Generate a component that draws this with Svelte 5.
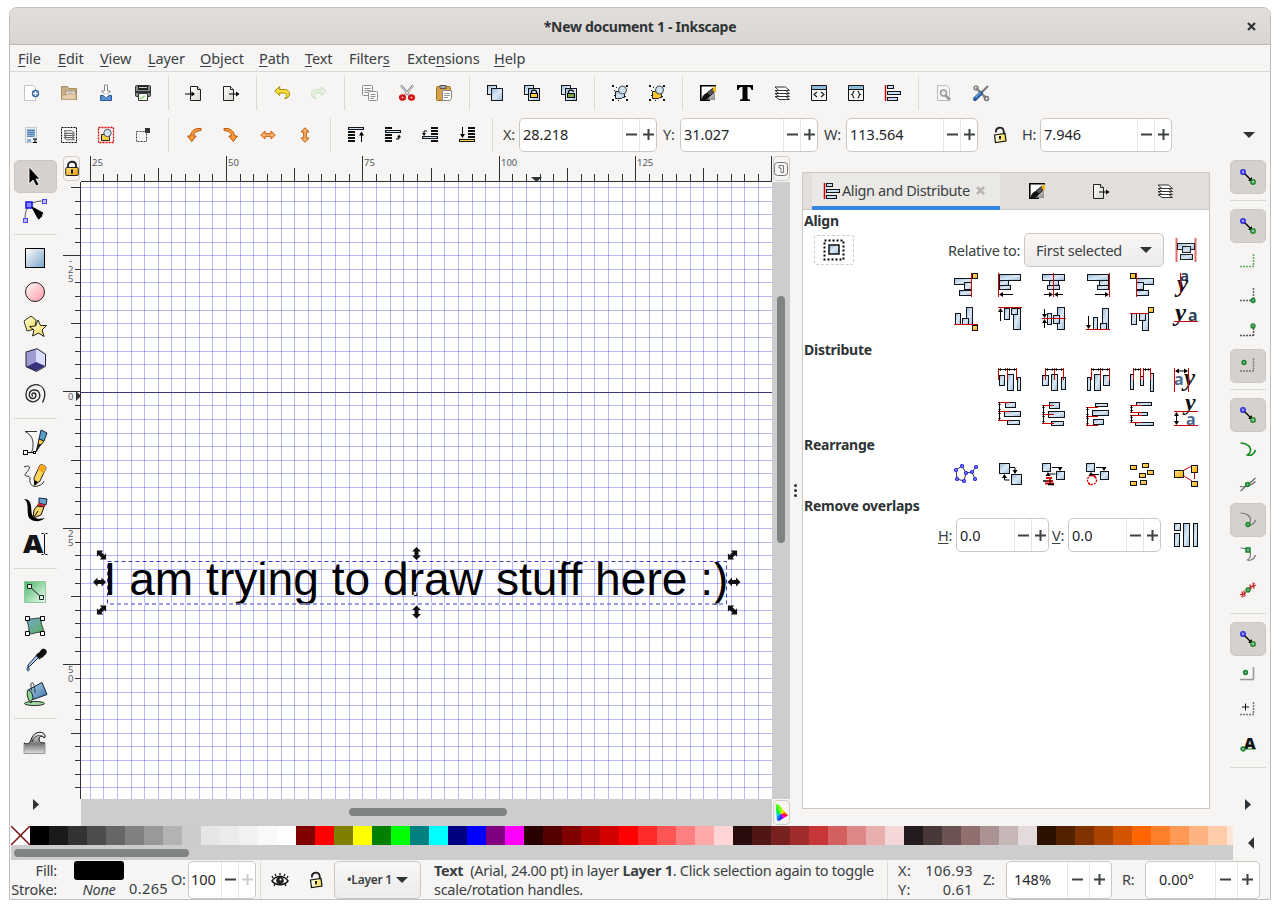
<script>
  const box = (x, y, w, h, f = 'url(#gb)') =>
    `<rect x="${x + 0.5}" y="${y + 0.5}" width="${w}" height="${h}" fill="${f}" stroke="#10161c"/>`;
  const red = (d) => `<path d="${d}" stroke="#c00" fill="none"/>`;
  const blk = (d) => `<path d="${d}" stroke="#000" fill="none"/>`;
  const yel = (x, y) => box(x, y, 5, 5, 'url(#gy)');
  const ser = (x, y, s, c = '#111') =>
    `<text x="${x}" y="${y}" font-family="Liberation Serif" font-style="italic" font-weight="bold" font-size="${s}" fill="${c}">y</text>`;
  const san = (x, y, s, c = '#4a6a90') =>
    `<text x="${x}" y="${y}" font-family="Noto Sans" font-weight="bold" font-size="${s}" fill="${c}">a</text>`;

  const doc = `<path d="M4.500 1.500h7l3 3v11h-10z" fill="url(#gw)" stroke="#222"/><path d="M11.500 1.500v3h3" fill="#eee" stroke="#222"/>`;
  const layers = (c = '#333') =>
    `<g fill="#fff" stroke="${c}"><path d="M1 11.500h10.500l4 3H5z"/><path d="M1 8.500h10.500l4 3H5z"/><path d="M1 5.500h10.500l4 3H5z"/><path d="M1 2h10.500l4 3.500H5z"/></g>`;
  const align = `<path d="M.5 0v16" stroke="#c00" stroke-width="1.500"/>${box(2, 0, 6, 3)}${box(2, 6, 13, 3)}${box(2, 12, 10, 3)}`;
  const fillstroke = `<path d="M1 1h14L9 8l-8 7z" fill="#fff"/><path d="M15 2v13H5z" fill="url(#gk)"/><path d="M16 .8H.8v14.400H10" stroke="#000" stroke-width="1.600" fill="none"/><path d="M1 15.500c2-6 4-7 6-7.500l3 3c-1 2.500-4 4.500-9 4.500z" fill="#111"/><path d="M7 8l6-5 3 2-6 6z" fill="#555" stroke="#000" stroke-width=".8"/><path d="M12.500 4l1.500-2.500 2 .5v4.500l-1.500 1z" fill="#f5b911"/>`;
  const arrowTurn = '<path d="M15 1.500C9 1 5 3.500 4.500 9H1.500l4.200 5.500L10.200 9H7.500c.3-3 2.500-5 7.500-5.500z" fill="#f89a3c" stroke="#b85205"/>';
  const arrowH = '<path d="M.7 8L5 4V6.700h6V4l4.300 4-4.300 4V9.300H5V12z" fill="#fbb36b" stroke="#c45a06"/>';
  const undo = (a, b) => `<path d="M.7 6l5-4.500V4.500H10c4 0 5.500 2 5.500 4.500s-2 4.500-5 4.500c2-1 2.500-2 2-3C12 9 11 8 9.500 8H5.700v2.500z" fill="${a}" stroke="${b}"/>`;
  const lockOpen = '<path d="M4 5.500C3 0 11-1 11.500 3.500l.5 3" fill="none" stroke="#222" stroke-width="1.800"/><path d="M2.500 8l10.500-1.500 1 7.500-10.500 1.500z" fill="url(#gl)" stroke="#111" stroke-width="1.200"/><path d="M8 9v3.500M7 10.300h2" stroke="#000" stroke-width="1.500"/>';
  const win = '<path d="M.5.5h15v15H.5z" fill="#f4f6f6" stroke="#111"/><path d="M1 1h14v3H1z" fill="#8fbfe0"/><path d="M1 4.500h14" stroke="#111"/>';
  const dup = box(0, 0, 9, 9) + box(4, 3, 11, 12);
  const handles = '<path d="M0 0h2v2H0zM14 0h2v2h-2zM0 14h2v2H0zM14 14h2v2h-2zM4 2h1v1H4zM2 5h1v1H2zM2 10h1v1H2zM6 15h1v1H6zM13 11h1v1h-1z" fill="#111"/>';
  const group = (f) => `<path d="M3.500 6.500h9v6h-2l-1 1h-6z" fill="${f}" stroke="#222"/><circle cx="10.500" cy="5" r="4" fill="#cfe0ef" stroke="#444"/>`;
  const snapMain = '<path d="M3 3l8 8" stroke="#000" stroke-width="1.500"/><path d="M12 12V8l-4 4z"/><circle cx="3" cy="3" r="2.200" fill="#9a9aff" stroke="#2b2be0" stroke-width="1.500"/><circle cx="13" cy="13" r="2.200" fill="#9bb" stroke="#208a20" stroke-width="1.500"/>';
  const gdot = (x, y) => `<circle cx="${x}" cy="${y}" r="1.900" fill="#8b9fc0" stroke="#158a1e" stroke-width="1.500"/>`;
  const corner = (c) => `<path d="M0 12.500h14M13.500 0v12" fill="none" stroke="${c}" stroke-width="1.500" stroke-dasharray="2 1"/>`;
  const curve = (c, w = 1.2) => `<path d="M.5 1C6 1 11 4 10.500 8.500 10.500 11 9 12 7.500 13c3 1 7-.5 8-5" fill="none" stroke="${c}" stroke-width="${w}"/>`;

  const icons = {
    new: '<path d="M.5.500h9l2 2v13H.5z" fill="#fff" stroke="#c2c6c8"/><circle cx="11.500" cy="8.500" r="3.700" fill="#3465a4"/><path d="M11.500 6v5M9 8.500h5" stroke="#fff" stroke-width="1.500"/>',
    open: '<path d="M.5 1.500h6l1.500 2h7.500v11H.5z" fill="#c8ae84" stroke="#a98d60"/><path d="M5 6h9v5H5z" fill="#fff" stroke="#9a8a70"/><path d="M7 8h5" stroke="#888"/><path d="M1 10h4l1-1h9l-.5 5.500H1z" fill="#e6cdaf" stroke="#b89c74" stroke-width=".6"/>',
    save: '<path d="M6.500 0h3v6h3l-4.500 4.500L3.500 6h3z" fill="#fff" stroke="#888"/><path d="M2.500 10.500h2.500l3 2 3-2h2.500v5h-11z" fill="#5b90d5" stroke="#2a5799"/><path d="M5 9.500l3 3 3-3" fill="#fff"/>',
    print: '<rect x=".5" y=".5" width="15" height="11" rx="1" fill="#888a85" stroke="#2e3436"/><path d="M3 1h10v4H3z" fill="#222"/><path d="M4 2.500h8" stroke="#ccc"/><path d="M1 7h14" stroke="#2e3436" stroke-width="2"/><path d="M3.500 8.500h9v7h-9z" fill="#f4fff0" stroke="#2e3436"/><path d="M5 14l5-3" stroke="#9fce88" stroke-width="1.500"/>',
    import: doc + '<path d="M-1 9h9" stroke="#000" stroke-width="1.200"/><path d="M9 9L5.500 6.500v5z"/>',
    export: `<g transform="translate(-4)">${doc}</g>` + '<path d="M6 9h8" stroke="#000" stroke-width="1.200"/><path d="M16.500 9L13 6.500v5z"/>',
    undo: undo('#f5dc3c', '#a58a00'),
    redo: `<g transform="matrix(-1 0 0 1 16 0)" opacity=".45">${undo('#d6f0c8', '#8fc47c')}</g>`,
    copy: '<g fill="#fbfbfa" stroke="#8b8e8c"><rect x=".5" y=".5" width="10" height="10" rx="1"/><path d="M2.500 3.500h6M2.500 5.500h6M2.500 7.500h4"/><rect x="6.500" y="6.500" width="9" height="9" rx="1"/><path d="M8.500 9.500h5M8.500 11.500h5M8.500 13.500h3"/></g>',
    cut: '<path d="M2 .5L10 10M14 .5L6 10" stroke="#888" stroke-width="2.400"/><path d="M2 1l8 9M14 1l-8 9" stroke="#eee"/><g fill="none" stroke="#d01818" stroke-width="2.600"><ellipse cx="3.500" cy="12.500" rx="2.300" ry="2"/><ellipse cx="12.500" cy="12.500" rx="2.300" ry="2"/></g>',
    paste: '<rect x=".5" y="1.500" width="14" height="14" rx="1" fill="#d9a04a" stroke="#a06d1c"/><path d="M4 .5h6v3H4z" fill="#aaa" stroke="#555"/><path d="M6.500 5.500h9v8l-2 2h-7z" fill="#fff" stroke="#888"/><path d="M8 8.500h6M8 10.500h6M8 12.500h4" stroke="#999"/>',
    duplicate: dup,
    clone: dup + '<path d="M7.500 9V7c0-2.500 5-2.500 5 0v2" fill="none" stroke="#000" stroke-width="1.300"/><rect x="6.500" y="8.500" width="7" height="4" fill="#f7d038" stroke="#000"/>',
    unclone: dup + '<path d="M7.500 9V7c0-2.500 5-2.500 5 0" fill="none" stroke="#000" stroke-width="1.300"/><rect x="6.500" y="8.500" width="7" height="4" fill="#7aa63c" stroke="#000"/>',
    group: group('url(#gb)') + handles,
    ungroup: group('#f7c52c') + handles,
    fillstroke,
    text: '<path d="M0 0h16v5h-1.500C14 2.500 13 2 10.500 2v11c0 1.500 1 1.500 2.500 1.500V16H3v-1.500c1.500 0 2.500 0 2.500-1.500V2C3 2 2 2.500 1.500 5H0z"/>',
    layers: layers(),
    xml: win + '<path d="M6 7L3 9.500 6 12M10 7l3 2.500L10 12" stroke="#222" fill="none" stroke-width="1.200"/>',
    css: win + '<path d="M6.500 6c-2 0-1 3-2.500 3.500 1.500.5.500 3.500 2.500 3.500M9.500 6c2 0 1 3 2.500 3.500-1.500.500-.5 3.500-2.500 3.500" stroke="#222" fill="none" stroke-width="1.200"/>',
    align,
    docprops: '<path d="M1.500.500h9l3 3v12h-12z" fill="#f6f6f6" stroke="#bbb"/><path d="M8 9l6 6" stroke="#999" stroke-width="2.500"/><circle cx="7.500" cy="8" r="3" fill="#eee" stroke="#999" stroke-width="1.500"/>',
    prefs: '<path d="M3 3l10 10" stroke="#888a85" stroke-width="2.500"/><circle cx="3" cy="3" r="2" fill="none" stroke="#888a85" stroke-width="1.600"/><circle cx="13.500" cy="13.500" r="2" fill="none" stroke="#777" stroke-width="1.600"/><path d="M15 1L8 8" stroke="#777" stroke-width="2"/><path d="M8 8l-6 6" stroke="#2d5c9e" stroke-width="4" stroke-linecap="round"/><path d="M7.500 7.500l-5 5" stroke="#78a8e0" stroke-width="1.200"/>',
    selall: '<path d="M1.500.5h11v15h-11z" fill="#eef3f7" stroke="#c2cacd"/><path d="M3 2h8v8H3z" fill="#8fb2d8"/><path d="M3 3.500h8M3 5.500h8M3 7.500h8M3 9.500h6" stroke="#5f86b4"/><path d="M3 12h4v3H3z" fill="#8fb2d8"/><path d="M9 12h4M9 15.500h4M11 12v3" stroke="#000"/>',
    sellayers: `<rect x=".5" y=".5" width="15" height="15" fill="none" stroke="#000" stroke-dasharray="2 1"/><g transform="translate(2.300 2.300) scale(.72)">${layers()}</g>`,
    desel: '<rect x=".5" y=".5" width="15" height="15" fill="none" stroke="#d00" stroke-width="1.300" stroke-dasharray="2 1"/><path d="M3.500 7.500h8v6h-8z" fill="#f7d038" stroke="#222"/><circle cx="9.500" cy="6" r="3.700" fill="#cfe0ef" stroke="#555"/>',
    touch: '<rect x="1.500" y="4.500" width="10" height="10" fill="none" stroke="#444" stroke-dasharray="2 1"/><path d="M10 1h5v5h-5z" fill="#2e3436"/>',
    rotl: arrowTurn,
    rotr: `<g transform="matrix(-1 0 0 1 16 0)">${arrowTurn}</g>`,
    fliph: arrowH,
    flipv: `<g transform="rotate(90 8 8)">${arrowH}</g>`,
    ztop: `<path d="M0 5h7M0 8h7M0 11h7M0 14h7" stroke="#111" stroke-width="2"/>${box(0, 0, 15, 2)}<path d="M13.500 15V6" stroke="#000"/><path d="M13.500 4.500l-2.500 4h5z"/>`,
    zup: `<path d="M0 1h7M0 8h7M0 11h7M0 14h7" stroke="#111" stroke-width="2"/>${box(0, 3, 15, 2)}<path d="M11 12h3v-2" fill="none" stroke="#000"/><path d="M14 7.500l-2 3h4z"/>`,
    zdown: `<path d="M9 1h7M9 4h7M9 7h7M9 14h7" stroke="#111" stroke-width="2"/>${box(0, 9, 15, 2)}<path d="M5 4H2v3" fill="none" stroke="#000"/><path d="M2 9L0 6h4z"/>`,
    zbottom: `<path d="M9 1h7M9 4h7M9 7h7M9 10h7" stroke="#111" stroke-width="2"/>${box(0, 12, 15, 2, '#fbc84a')}<path d="M3.500 0v9" stroke="#000"/><path d="M3.500 11L1 7h5z"/>`,
    lockopen: lockOpen,
    eye: '<path d="M0 9c4-6 12-6 16 0-4 5-12 5-16 0z" fill="#fff" stroke="#111" stroke-width="1.500"/><circle cx="8" cy="8.500" r="3.800" fill="#222"/><circle cx="8.500" cy="7.500" r="1" fill="#fff"/><path d="M1 6L0 4M4 4L3 2M8 3.500V1M12 4l1-2M15 6l1-2M3 12l-1 2M13 12l1 2" stroke="#111" stroke-width="1.300"/>',
    snap: snapMain,
    bbox: `<g transform="translate(0 1)">${corner('#5fae62')}</g>`,
    bboxedge: corner('#666') + gdot(13, 12.5),
    bboxmid: '<path d="M0 12.500h13M13.500 5v8" fill="none" stroke="#555" stroke-width="1.500" stroke-dasharray="2 1"/>' + gdot(13, 3),
    bboxctr: `<g transform="translate(0 .5)">${corner('#777')}${gdot(4, 4)}</g>`,
    path: curve('#158a1e', 1.6),
    inter: '<path d="M.5 14L15.500 1M0 9.500c6 1 11-1 15.500-5" fill="none" stroke="#666" stroke-width="1.200"/>' + gdot(7.5, 7.5),
    cusp: curve('#777') + gdot(8, 12.5),
    smooth: curve('#777') + '<rect x="6" y="1" width="4" height="4" fill="#8b9fc0" stroke="#158a1e" stroke-width="1.500"/>',
    mid: '<path d="M1 15L15 1" stroke="#777"/><path d="M2 9.500l1 6M4 8.500l1 6M0 13l6-2M10 2.500l1 5M13 .500l1 6M9 6l7-3" stroke="#d02020" stroke-width="1.300"/>' + gdot(8, 8),
    objctr: '<path d="M0 13.500h14M13.500 1v12" fill="none" stroke="#999" stroke-width="1.600"/>' + gdot(5.5, 6.5),
    rotctr: '<g transform="translate(0 1)">' + corner('#777') + '</g><path d="M5.500 2.500v7M2 6h7" stroke="#111"/>',
    textbase: '<path d="M1 13h15" stroke="#5fae62" stroke-width="1.500"/><text x="4" y="12.500" font-family="Noto Sans" font-weight="900" font-size="16" fill="#111">A</text><circle cx="3" cy="13" r="2" fill="#8b9fc0" stroke="#158a1e" stroke-width="1.300"/>'
  };

  const tools = {
    select: '<path d="M6 3v17l4-4 3 6 3-1.500-3-5.500H17z" fill="#000" stroke="#fff" stroke-width=".8"/>',
    node: '<path d="M2 21C2 8 8 3 20 3" fill="none" stroke="#555"/><rect x="3" y="4" width="6" height="6" fill="#88f" stroke="#1010e0" stroke-width="1.500"/><rect x="19.500" y="1.500" width="4" height="4" fill="#bbf" stroke="#4a4af0"/><rect x=".5" y="20.500" width="4" height="4" fill="#bbf" stroke="#4a4af0"/><path d="M9 9l11 6-1.500 2 .500 1-3 3-1-.5z" stroke="#000"/>',
    rect: '<rect x="2.500" y="2.500" width="19" height="19" fill="url(#gt)" stroke="#000"/>',
    circle: '<circle cx="12" cy="12" r="9.500" fill="url(#gp)" stroke="#222"/>',
    star: '<path d="M1 7l7-5 5 4-1 9-8 2z" fill="url(#gs)" stroke="#333"/><path d="M15 6l2.500 5.500 6 0-4.500 4.500 2 6.500-5.500-3.500-6 3 1.500-6-4.500-3.500 6-.500z" fill="url(#gs)" stroke="#222"/>',
    cube: '<path d="M13 1l9 5v12l-9 5-10-4V4z" fill="#9c9cd2"/><path d="M13 1l9 5v12l-9-4z" fill="#dcdcff"/><path d="M3 19l10-5 9 4-9 5z" fill="#34347c"/><path d="M14 .700l8.500 5.500v12l-9 5.300-10.500-5V4z" fill="none" stroke="#223"/>',
    spiral: '<path d="M10.500 13.500c-2-.5-1-3.500 1-3 3 .7 2.500 5.500-1.500 5.500C6 16 5 8 11.500 7.500c6-.3 7.500 7 3.500 10-5 4-12 .500-11.500-6C4 1 19-1.500 22 9c.7 3 0 7-2 11" fill="none" stroke="#222" stroke-width="1.300" transform="translate(-.5 .500)"/>',
    pen: '<path d="M2 1.500h12M2 1.500C9 5 10 10 10 14c0 5-1 8-2 8" fill="none" stroke="#333"/><path d="M18 0l6 3-3 8-5-2z" fill="#5c9cc8" stroke="#124"/><path d="M16 9l5 2-3 4-3-1z" fill="#f3c544" stroke="#222"/><path d="M15 14l2.500 1L13 22z" fill="#222" stroke="#222"/><path d="M4 22.500h8" stroke="#000"/><rect x=".5" y="20.500" width="4" height="4" fill="#fff" stroke="#000"/><rect x="10.500" y="21.500" width="2" height="2" fill="#fff" stroke="#000"/>',
    pencil: '<path d="M1 3c8-3 6 2 2 6-4 5 5 1 4 6-1 4 2 9 8 7 3-1 5-2 6-5" fill="none" stroke="#333"/><path d="M11 14l6-13c2-1 6 1 6 3l-6 13-5 4z" fill="#fbd657" stroke="#222"/><path d="M17 1c2-1 6 1 6 3l-2 5-6-3z" fill="#fba81c"/><path d="M11.500 16l3.500 2-4 4z"/>',
    calli: '<path d="M1 1c8 0 7 8 7.500 13 .5 6 5.500 8 13.500 6-5 5-16 4-17-3C4 11 6 4 1 1z"/><path d="M16 0l8 1-1 6-7-2z" fill="#6ba2c8" stroke="#124"/><path d="M15 5l7 2v2l-8-1z" fill="#d22"/><path d="M14 8l7 1-3 8-8 3 1-8z" fill="#f8d36a" stroke="#111"/><path d="M11 19l4-6" stroke="#111"/>',
    texttool: '<text x="0" y="20.500" font-family="Noto Sans" font-weight="900" font-size="25" textLength="20" lengthAdjust="spacingAndGlyphs" fill="#141414">A</text><path d="M18.500 1.500h2l1 1 1-1h2M18.500 22.500h2l1-1 1 1h2M21.500 2v20" stroke="#111" fill="none"/>',
    gradient: '<path d="M1.500 1.500h21v21h-21z" fill="url(#gg)" stroke="#8cc89b"/><path d="M7 7l10 9" stroke="#222"/><path d="M4.500 4.500h4v4h-4zM16.500 15.500h4v4h-4z" fill="#dff0e0" stroke="#222"/>',
    mesh: '<path d="M4 4c6 3 10-2 15 1-3 5 3 9 1 14-6-3-10 3-15 0 3-6-2-10-1-15z" fill="url(#gm)" stroke="#243" /><path d="M2.500 2.500h4v4h-4zM17.500 2.500h4v4h-4zM2.500 17.500h4v4h-4zM17.500 17.500h4v4h-4z" fill="#fff" stroke="#000"/>',
    dropper: '<path d="M16 9L7 18l-2 1v-2l9-10z" fill="#a8ceee" stroke="#224"/><path d="M14 6l4 4" stroke="#111" stroke-width="4"/><path d="M15 6l3-4c2-3 8 0 5 4l-4 4z" fill="#111"/><path d="M5 19c-3 4 2 6 1 1z" fill="#7ab0e0" stroke="#246"/>',
    bucket: '<ellipse cx="11.500" cy="21.500" rx="10" ry="2" fill="#9fe0a2" stroke="#222"/><path d="M5 8L19 .500l5 12-14 5z" fill="url(#gk2)" stroke="#124"/><path d="M5 8c3 0 5 5 5 9.500-2 0-2 1-2 3.500-3-3-5-9-3-13z" fill="#8fd497" stroke="#222"/><path d="M9 9C7 2 8 0 10 1c1 1 2 6 2 10" fill="none" stroke="#333"/>',
    tweak: '<path d="M1 23.500V13c4 2 6 0 7-3 2-7 8-9 12-7 2 1 3 4 1 5-1-3-5-2-5 1s1 4 6 4v10.500z" fill="url(#gw2)" stroke="#999"/><path d="M1 13c4 2 6 0 7-3 2-7 8-9 12-7 2 1 3 4 1 5-1-3-5-2-5 1s1 4 6 4" fill="none" stroke="#222"/><path d="M9 12c2-6 6-7 9-6" fill="none" stroke="#333"/>'
  };

  const arrL = (x, y) => `<path d="M${x} ${y}l4-2.500v5z"/>`;
  const arrR = (x, y) => `<path d="M${x} ${y}l-4-2.500v5z"/>`;
  const arrU = (x, y) => `<path d="M${x} ${y}l-2.500 4h5z"/>`;
  const arrD = (x, y) => `<path d="M${x} ${y}l-2.500-4h5z"/>`;
  const ticksH = (a, b, c, d) => blk(`M${a} 1.500H${b}M${c} 1.500H${d}`) + [a, c].map((x) => `<path d="M${x + 1} 1.500l2-1.500v3z"/>`).join('') + [b, d].map((x) => `<path d="M${x} 1.500l-2-1.500v3z"/>`).join('');
  const ticksV = (a, b, c, d) => blk(`M1.500 ${a}V${b}M1.500 ${c}V${d}`) + [a, c].map((y) => `<path d="M1.500 ${y + 1}l-1.500 2h3z"/>`).join('') + [b, d].map((y) => `<path d="M1.500 ${y}l-1.500-2h3z"/>`).join('');
  const swap = box(0, 0, 8, 8);
  const smallYel = (x, y) => box(x, y, 6, 4, 'url(#gy)');

  const alignRows = [
    [
      box(0, 5, 17, 6) + box(10, 9, 7, 7) + box(5, 17, 12, 5) + red('M17.500 0v24') + yel(18, 0),
      box(1, 1, 21, 6) + box(1, 7, 9, 5) + box(1, 12, 11, 4) + red('M.5 0v24') + blk('M3 21.500h12') + arrL(1, 21.5),
      box(0, 1, 22, 6) + box(7, 7, 9, 5) + box(5, 12, 12, 4) + red('M11.500 0v24') + blk('M2 21.500h6M15 21.500h6') + arrR(11, 21.5) + arrL(12, 21.5),
      box(1, 1, 21, 6) + box(13, 7, 9, 5) + box(11, 12, 11, 4) + red('M23.500 0v24') + blk('M9 21.500h11') + arrR(23, 21.5),
      box(6, 5, 17, 6) + box(6, 9, 7, 7) + box(6, 17, 12, 5) + red('M6.500 0v24') + yel(0, 0),
      san(6, 8, 15, '#2f435c') + ser(3, 19, 25) + red('M6.500 0v22')
    ],
    [
      box(1, 6, 5, 11) + box(12, 0, 6, 17) + box(8, 11, 6, 6) + red('M0 17.500h24') + yel(18, 18),
      box(6, 1, 5, 11) + box(15, 1, 7, 21) + box(13, 1, 6, 6) + red('M0 .5h24') + blk('M2.500 4v10') + arrU(2.5, 1),
      box(5, 6, 4, 11) + box(15, 0, 7, 22) + box(11, 8, 6, 8) + red('M0 11.500h24') + blk('M2.500 2v6M2.500 15v6') + arrD(2.5, 11) + arrU(2.5, 12),
      box(7, 10, 4, 12) + box(16, 1, 6, 21) + box(14, 16, 6, 6) + red('M0 22.500h24') + blk('M2.500 9v11') + arrD(2.5, 22),
      box(1, 6, 5, 11) + box(12, 6, 6, 17) + box(9, 6, 6, 7) + red('M0 6.500h18') + yel(18, 0),
      ser(1, 14, 25) + san(14, 14, 16, '#2f435c') + red('M0 14.500h24')
    ]
  ];
  const distRows = [
    [
      box(1, 7, 5, 10) + box(9, 6, 6, 16) + box(19, 9, 3, 13) + red('M.5 0v12M9.500 0v12M18.500 0v12') + ticksH(0, 9, 9, 18),
      box(0, 7, 6, 10) + box(9, 6, 6, 16) + box(19, 9, 4, 12) + red('M3.500 0v12M12.500 0v12M21.500 0v12') + ticksH(3, 12, 12, 21),
      box(1, 9, 3, 13) + box(8, 6, 6, 16) + box(17, 7, 6, 10) + red('M5.500 0v12M14.500 0v12M23.500 0v12') + ticksH(5, 14, 14, 23),
      box(0, 6, 3, 15) + box(10, 8, 3, 9) + box(20, 5, 3, 18) + red('M3.500 0v12M10.500 0v12M13.500 0v12M20.500 0v12') + ticksH(3, 10, 13, 20),
      san(0, 17, 16) + ser(10, 18, 25) + red('M.5 0v24M14.500 0v24') + blk('M2 3h11') + arrL(1, 3) + arrR(14, 3)
    ],
    [
      box(7, 0, 10, 5) + box(6, 9, 16, 5) + box(9, 18, 12, 4) + red('M0 .5h12M0 9.500h12M0 18.500h12') + ticksV(0, 9, 9, 18),
      box(7, 0, 10, 6) + box(6, 9, 16, 6) + box(9, 19, 12, 4) + red('M0 3.500h12M0 12.500h12M0 21.500h12') + ticksV(3, 12, 12, 21),
      box(9, 1, 12, 3) + box(6, 8, 16, 5) + box(7, 17, 10, 5) + red('M0 5.500h12M0 14.500h12M0 23.500h12') + ticksV(5, 14, 14, 23),
      box(6, 0, 15, 3) + box(8, 10, 9, 3) + box(5, 20, 18, 3) + red('M0 3.500h12M0 10.500h12M0 13.500h12M0 20.500h12') + ticksV(3, 10, 13, 20),
      ser(11, 8, 24) + san(12, 23, 16) + red('M0 9.500h24M0 23.500h24') + blk('M2.500 11v11') + arrU(2.5, 10) + arrD(2.5, 23)
    ]
  ];
  const nodes = [[2, 7], [8, 3], [12, 10], [10, 18], [3, 16], [18, 9], [22, 4], [21, 16]];
  const rearrange = [
    '<path d="M2 7l6-4 4 7-2 8-7-2zM12 10l6-1 4-5M18 9l3 7" fill="none" stroke="#333"/>' + nodes.map(([x, y]) => `<circle cx="${x}" cy="${y}" r="1.500" fill="#99f" stroke="#1c1ce8" stroke-width="1.200"/>`).join(''),
    box(1, 0, 10, 10) + box(13, 11, 10, 10) + blk('M12 4.500h5v5M6.500 13v4h5') + arrD(17, 11) + arrU(6.500, 11),
    swap + box(14, 8, 8, 8) + blk('M10 4.500h8v2M6.500 12v-1h7') + arrD(18, 8) + arrU(6, 9) + '<path d="M4 15h6M5 18h6M3 20.500h9" stroke="#d00" stroke-width="2"/><path d="M1 18h4M8 16v6M6 21.500h6" stroke="#000" stroke-width="1.300"/>',
    swap + box(14, 8, 8, 8) + blk('M10 4.500h8v2M6 11.500h7') + arrD(18, 8) + arrU(5, 9) + '<circle cx="6" cy="17" r="4.500" fill="none" stroke="#c00" stroke-width="1.300" stroke-dasharray="2 1"/><path d="M7 11l3 2-1 3zM5 23l-3-2 1-2z" fill="#c00"/>',
    [[0, 2], [12, 0], [17, 7], [9, 10], [0, 18], [10, 17]].map(([x, y]) => smallYel(x, y)).join(''),
    red('M10 7l8-4M10 13l8 5M20.500 9v7') + box(0, 7, 9, 7, 'url(#gy)') + box(17, 2, 6, 7, 'url(#gy)') + box(17, 18, 6, 5, 'url(#gy)')
  ];

  const commandBar = [['new', 'open', 'save', 'print'], ['import', 'export'], ['undo', 'redo'], ['copy', 'cut', 'paste'], ['duplicate', 'clone', 'unclone'], ['group', 'ungroup'], ['fillstroke', 'text', 'layers', 'xml', 'css', 'align'], ['docprops', 'prefs']];
  const controlBar = [['selall', 'sellayers', 'desel', 'touch'], ['rotl', 'rotr', 'fliph', 'flipv'], ['ztop', 'zup', 'zdown', 'zbottom']];
  const toolGroups = [['select', 'node'], ['rect', 'circle', 'star', 'cube', 'spiral'], ['pen', 'pencil', 'calli', 'texttool'], ['gradient', 'mesh', 'dropper', 'bucket'], ['tweak']];
  const snapGroups = [[['snap', 1]], [['snap', 1], ['bbox', 0], ['bboxedge', 0], ['bboxmid', 0], ['bboxctr', 1]], [['snap', 1], ['path', 0], ['inter', 0], ['cusp', 1], ['smooth', 0], ['mid', 0]], [['snap', 1], ['objctr', 0], ['rotctr', 0], ['textbase', 0]]];
  const menus = [['', 'F', 'ile', 40], ['', 'E', 'dit', 42], ['', 'V', 'iew', 48], ['', 'L', 'ayer', 52], ['', 'O', 'bject', 59], ['', 'P', 'ath', 46], ['', 'T', 'ext', 44], ['Filter', 's', '', 58], ['Exte', 'n', 'sions', 87], ['', 'H', 'elp', 60]];
  const palette = '000000 1a1a1a 333333 4d4d4d 666666 808080 999999 b3b3b3 cccccc e6e6e6 ececec f2f2f2 f9f9f9 ffffff 800000 ff0000 808000 ffff00 008000 00ff00 008080 00ffff 000080 0000ff 800080 ff00ff 2b0000 550000 800000 aa0000 d40000 ff0000 ff2a2a ff5555 ff8080 ffaaaa ffd5d5 280b0b 501616 782121 a02c2c c83737 d35f5f de8787 e9afaf f4d7d7 241c1c 483737 6c5353 916f6f ac9393 c8b7b7 e3dbdb 2b1100 552200 803300 aa4400 d45500 ff6600 ff7f2a ff9955 ffb380 ffccaa ffe6d5'.split(' ');

  const step = 13.64;
  const vLines = Array.from({ length: 50 }, (_, k) => Math.floor(90.1 + k * step) - 81);
  const hLines = Array.from({ length: 45 }, (_, k) => ({ n: k - 15, y: Math.floor(392.1 + (k - 15) * step) - 182 }));
  const hLabels = [25, 50, 75, 100, 125];
  const vLabels = [['-25', 255], ['0', 391], ['25', 528], ['50', 664]];
  const arrowShape = 'M0-6.500L4.500-2H2V2H4.500L0 6.500-4.500 2H-2V-2H-4.500z';
  const selHandles = [[101.5, 555, -45], [101.5, 610, 45], [732.5, 555, 45], [732.5, 610, -45], [416.5, 553.5, 0], [416.5, 612, 0], [99.5, 582, 90], [734, 582, 90]];
</script>

{#snippet icon(src, size = 16)}
  <svg class="icon" width={size} height={size} viewBox="0 0 {size} {size}">{@html src}</svg>
{/snippet}

{#snippet spin(value, width, pad = 3, off = false, bw = 17)}
  <div class="spin" style="width:{width}px">
    <span class="val" style="padding-left:{pad}px">{value}</span>
    <span class="step" style="width:{bw}px"><svg width="11" height="11"><path d="M0 5.500h11" stroke="#3c4244" stroke-width="2" /></svg></span>
    <span class="step" class:off style="width:{bw}px"><svg width="11" height="11"><path d="M0 5.500h11M5.500 0v11" stroke="#3c4244" stroke-width="2" /></svg></span>
  </div>
{/snippet}

<svg class="defs" width="0" height="0">
  <defs>
    <linearGradient id="gb" x1="0" y1="0" x2="1" y2="1"><stop offset="0" stop-color="#94b6d6" /><stop offset=".5" stop-color="#dce9f4" /><stop offset="1" stop-color="#9bbad8" /></linearGradient>
    <linearGradient id="gy" x1="0" y1="0" x2="1" y2="1"><stop offset="0" stop-color="#ffe488" /><stop offset="1" stop-color="#f3a800" /></linearGradient>
    <linearGradient id="gw" x1="0" y1="0" x2="1" y2="1"><stop offset="0" stop-color="#fff" /><stop offset="1" stop-color="#d8d8d0" /></linearGradient>
    <linearGradient id="gw2" x1="0" y1="0" x2="0" y2="1"><stop offset="0" stop-color="#fff" /><stop offset=".55" stop-color="#777" /><stop offset="1" stop-color="#ddd" /></linearGradient>
    <linearGradient id="gk" x1="0" y1="0" x2="1" y2="1"><stop offset="0" stop-color="#fff" /><stop offset="1" stop-color="#888" /></linearGradient>
    <linearGradient id="gk2" x1="0" y1="0" x2="1" y2="1"><stop offset="0" stop-color="#b4dcec" /><stop offset="1" stop-color="#3a6ea5" /></linearGradient>
    <linearGradient id="gm" x1="0" y1="0" x2="1" y2="1"><stop offset="0" stop-color="#74a8d0" /><stop offset="1" stop-color="#5cb060" /></linearGradient>
    <linearGradient id="gl" x1="0" y1="0" x2="1" y2="0"><stop offset="0" stop-color="#fff" /><stop offset="1" stop-color="#f7dc3c" /></linearGradient>
    <linearGradient id="gt" x1="0" y1="0" x2="1" y2="1"><stop offset="0" stop-color="#fff" /><stop offset="1" stop-color="#7ba4c8" /></linearGradient>
    <linearGradient id="gp" x1="0" y1="0" x2="1" y2="1"><stop offset="0" stop-color="#fff" /><stop offset="1" stop-color="#ff95a0" /></linearGradient>
    <linearGradient id="gs" x1="0" y1="0" x2="1" y2="1"><stop offset="0" stop-color="#fffce0" /><stop offset="1" stop-color="#f5dc50" /></linearGradient>
    <linearGradient id="gg" x1="0" y1="0" x2="1" y2="1"><stop offset="0" stop-color="#46b464" /><stop offset="1" stop-color="#f4fff4" /></linearGradient>
    <linearGradient id="lk" x1="0" y1="0" x2="1" y2="1"><stop offset="0" stop-color="#ffe680" /><stop offset="1" stop-color="#e39a00" /></linearGradient>
  </defs>
</svg>

<div class="window">
  <header class="title">*New document 1 - Inkscape
    <svg class="close" width="9" height="9"><path d="M1 1l7 7M8 1L1 8" stroke="#2e3436" stroke-width="2.200" /></svg>
  </header>
  <nav class="menu">
    {#each menus as [a, u, b, w]}<span style="width:{w}px">{a}<u>{u}</u>{b}</span>{/each}
  </nav>

  <div class="bar commands">
    {#each commandBar as g, i}
      {#if i}<i class="vsep"></i>{/if}
      {#each g as name}<span class="btn">{@render icon(icons[name])}</span>{/each}
    {/each}
  </div>

  <div class="bar controls">
    {#each controlBar as g}
      {#each g as name}<span class="btn">{@render icon(icons[name])}</span>{/each}
      <i class="vsep"></i>
    {/each}
    <label class="x">X:</label>{@render spin('28.218', 138)}
    <label class="y">Y:</label>{@render spin('31.027', 138)}
    <label class="w">W:</label>{@render spin('113.564', 132)}
    <span class="lock">{@render icon(icons.lockopen)}</span>
    <label class="h">H:</label>{@render spin('7.946', 132)}
    <svg class="more" width="12" height="6"><path d="M0 0h12L6 6z" fill="#2e3436" /></svg>
  </div>

  <main>
    <aside class="toolbox">
      {#each toolGroups as g, i}
        {#if i}<i class="hsep"></i>{/if}
        {#each g as name}<span class="tool" class:on={name === 'select'}>{@render icon(tools[name], 24)}</span>{/each}
      {/each}
      <svg class="expand" width="6" height="11"><path d="M0 0v11l6-5.500z" fill="#2e3436" /></svg>
    </aside>

    <section class="editor">
      <div class="corner"><span class="mini"><svg width="14" height="18"><path d="M3 8V5.500c0-5 8-5 8 0V8" fill="none" stroke="#222" stroke-width="1.800" /><rect x=".7" y="7.500" width="12.600" height="8" rx="1" fill="url(#lk)" stroke="#222" /><path d="M7 9.500v4" stroke="#111" stroke-width="2" /></svg></span></div>
      <svg class="ruler" width="691" height="27">
        <path d="M0 26.500h691" stroke="#2e3436" />
        {#each vLines as x, k}<path d="M{x + 0.5} {k % 10 === 0 ? 1 : k % 5 === 0 ? 13 : 19}V27" stroke="#2e3436" />{/each}
        {#each hLabels as t, k}<text x={vLines[k * 10] + 2} y="10.500">{t}</text>{/each}
        <path d="M450 22h11l-5.500 5z" fill="#2e3436" /><path d="M690.500 1v26" stroke="#2e3436" />
      </svg>
      <div class="corner right"><span class="mini"><svg width="15" height="20"><rect x=".5" y="3.500" width="13" height="13" rx="3" fill="#f6f5f4" stroke="#777" /><path d="M5 6.500h4.500v7H7v-4.500H5z" fill="#fff" stroke="#777" /></svg></span></div>
      <svg class="ruler" width="20" height="617">
        <path d="M19.500 0v617" stroke="#2e3436" />
        {#each hLines as { n, y }}<path d="M{n % 10 === 0 ? 2 : n % 5 === 0 ? 10 : 14} {(n === 0 ? y - 1 : y) + 0.5}H20" stroke="#2e3436" />{/each}
        {#each vLabels as [t, y]}
          {#each t.split('') as c, j}<text x={c === '-' ? 8 : 7} y={y - 182 + 9 + j * 9}>{c}</text>{/each}
        {/each}
        <path d="M15 209v10l5-5z" fill="#2e3436" />
      </svg>
      <svg class="canvas" width="691" height="617" viewBox="81 182 691 617">
        {#each vLines as x}<path d="M{x + 81.5} 182v617" stroke="#0000ff" stroke-opacity=".28" />{/each}
        {#each hLines as { n, y }}<path d="M81 {y + 182.5}h691" stroke={n === 0 ? '#38387c' : '#0000ff'} stroke-opacity={n === 0 ? 1 : 0.28} />{/each}
        <text x="103.500" y="595" textLength="625" lengthAdjust="spacingAndGlyphs" class="art">I am trying to draw stuff here :)</text>
        <rect x="107.500" y="561.500" width="619" height="42.500" fill="none" stroke="#fff" />
        <rect x="107.500" y="561.500" width="619" height="42.500" fill="none" stroke="#3c3cc8" stroke-dasharray="4 3" />
        <path d="M414 592l3 3M417 592l-3 3" stroke="#fff" stroke-width="2" /><path d="M414 595.500h3v-3" fill="none" stroke="#000" />
        {#each selHandles as [x, y, r]}<path d={arrowShape} transform="translate({x} {y}) rotate({r})" fill="#111" />{/each}
      </svg>
      <div class="vscroll"><i></i></div>
      <div class="nook"></div>
      <div class="hscroll"><i></i></div>
      <div class="cms"><span class="mini"><i class="wheel"></i></span></div>
    </section>

    <div class="grip"><i></i><i></i><i></i></div>

    <section class="dock">
      <div class="tabs">
        <div class="tab active">{@render icon(icons.align)}<span>Align and Distribute</span><svg width="9" height="9"><path d="M1 1l7 7M8 1L1 8" stroke="#b9b6b2" stroke-width="2.600" /></svg></div>
        <div class="tab t1">{@render icon(icons.fillstroke)}</div>
        <div class="tab t2">{@render icon(icons.export)}</div>
        <div class="tab t3">{@render icon(icons.layers)}</div>
      </div>
      <h4>Align</h4>
      <div class="relative">
        <span class="groupbtn"><svg width="22" height="22"><rect x="1.500" y="1.500" width="19" height="19" fill="none" stroke="#000" stroke-width="2" stroke-dasharray="2 2" /><rect x="6" y="6" width="10" height="9" fill="url(#gb)" stroke="#111" stroke-width="1.500" /></svg></span>
        <span class="rel">Relative to:</span>
        <span class="combo">First selected<svg width="12" height="6"><path d="M0 0h12L6 6z" fill="#2e3436" /></svg></span>
        <svg class="anchor" width="24" height="24"><path d="M2.500 0v24M21.500 0v24" stroke="#e06a6a" stroke-width="2" /><rect x="3.500" y="5.500" width="17" height="6" fill="url(#gb)" stroke="#222" /><rect x="8.500" y="8.500" width="8" height="6" fill="url(#gb)" stroke="#222" /><rect x="6.500" y="16.500" width="12" height="5" fill="url(#gb)" stroke="#222" /></svg>
      </div>
      {#each alignRows as row}<div class="irow">{#each row as s}{@render icon(s, 24)}{/each}</div>{/each}
      <h4 class="h2">Distribute</h4>
      {#each distRows as row, i}<div class="irow" class:dist={i === 0}>{#each row as s}{@render icon(s, 24)}{/each}</div>{/each}
      <h4 class="h3">Rearrange</h4>
      <div class="irow tall">{#each rearrange as s}{@render icon(s, 24)}{/each}</div>
      <h4 class="h4">Remove overlaps</h4>
      <div class="overlap">
        <label><u>H</u>:</label>{@render spin('0.0', 93)}
        <label class="v"><u>V</u>:</label>{@render spin('0.0', 93)}
        <svg width="24" height="24"><rect x=".5" y=".5" width="6" height="7" fill="url(#gb)" stroke="#111" /><rect x=".5" y="10.500" width="5" height="13" fill="url(#gb)" stroke="#111" /><rect x="9.500" y=".5" width="6" height="23" fill="url(#gb)" stroke="#111" /><rect x="19.500" y=".5" width="4" height="23" fill="url(#gb)" stroke="#111" /></svg>
      </div>
    </section>

    <aside class="snapbar">
      {#each snapGroups as g, i}
        {#if i}<i class="hsep"></i>{/if}
        {#each g as [name, on]}<span class="slot"><span class:on>{@render icon(icons[name])}</span></span>{/each}
      {/each}
      <i class="hsep"></i>
      <svg class="expand" width="6" height="11"><path d="M0 0v11l6-5.500z" fill="#2e3436" /></svg>
    </aside>
  </main>

  <div class="palette">
    <div class="strip">
      <div class="swatches">
        <svg width="19" height="19"><path d="M0 0h19v19H0z" fill="#fff" /><path d="M0 0l19 19M19 0L0 19" stroke="#7a1010" stroke-width="1.500" /></svg>
        {#each palette as c}<b style="background:#{c}"></b>{/each}
      </div>
      <div class="pscroll"><i></i></div>
    </div>
    <svg class="back" width="6" height="12"><path d="M6 0v12L0 6z" fill="#2e3436" /></svg>
  </div>

  <footer>
    <div class="fs lab"><span>Fill:</span><span>Stroke:</span></div>
    <div class="fs paint"><b></b><span><em>None</em></span></div>
    <div class="stroke-w">0.265</div>
    <label class="o">O:</label>{@render spin('100', 68, 2, true)}
    <i class="fsep"></i>
    <span class="eye">{@render icon(icons.eye)}</span>
    <span class="lk">{@render icon(icons.lockopen)}</span>
    <div class="layer">•Layer 1<svg width="12" height="6"><path d="M0 0h12L6 6z" fill="#2e3436" /></svg></div>
    <p><b>Text</b>&nbsp; (Arial, 24.00 pt) in layer <b>Layer 1</b>. Click selection again to toggle<br />scale/rotation handles.</p>
    <i class="fsep"></i>
    <div class="coords"><span>X:</span><span>106.93</span><span>Y:</span><span>0.61</span></div>
    <label class="z">Z:</label>{@render spin('148%', 106, 7, false, 22)}
    <label class="r">R:</label>{@render spin('0.00°', 115, 13, false, 22)}
  </footer>
</div>

<style>
  :global(body) { background: #fff; }
  .defs { position: absolute; }
  .window { box-sizing: border-box; width: 1262px; height: 893px; margin: 7px 0 0 9px; border: 1px solid #bfbfbf; border-radius: 8px 8px 0 0; background: #f6f5f4; overflow: hidden; font: 14.5px/19px "Noto Sans", sans-serif; letter-spacing: -0.25px; color: #3a4043; display: flex; flex-direction: column; }
  svg { display: block; flex: none; }
  .icon { overflow: visible; }
  .title { box-sizing: border-box; flex: none; height: 37px; background: linear-gradient(#e1dedb, #dad6d2); border-bottom: 1px solid #bfb8b1; text-align: center; font-weight: bold; font-size: 14px; line-height: 37px; position: relative; color: #2e3436; letter-spacing: -0.3px; }
  .close { position: absolute; right: 14px; top: 14px; }
  .menu { flex: none; display: flex; height: 26px; border-bottom: 1px solid #dcdad7; padding-left: 8px; line-height: 27px; white-space: nowrap; letter-spacing: -0.1px; }
  .menu span { flex: none; }
  u { text-underline-offset: 2px; text-decoration-thickness: 1px; }
  .bar { flex: none; display: flex; align-items: center; padding-left: 3px; }
  .commands { height: 42px; }
  .controls { height: 41px; }
  .btn { width: 37px; display: flex; justify-content: center; flex: none; }
  .vsep { width: 1px; height: 34px; margin: 0 6px 0 7px; background: #dcdad7; flex: none; }
  label { white-space: nowrap; flex: none; }
  .controls label { display: block; }
  .controls label.x { width: 16px; margin-left: 4px; }
  .controls label.y { width: 17px; margin-left: 6px; }
  .controls label.w { width: 22px; margin-left: 6px; }
  .controls label.h { width: 18px; margin-left: 14px; }
  .lock { margin-left: 14px; }
  .more { margin-left: 71px; }
  .spin { box-sizing: border-box; height: 34px; border: 1px solid #cdc7c2; border-radius: 5px; background: #fff; display: flex; color: #1f2426; flex: none; overflow: hidden; }
  .val { flex: 1; align-self: center; box-sizing: border-box; white-space: nowrap; letter-spacing: 0; }
  .step { box-sizing: border-box; border-left: 1px solid #e8e6e4; display: flex; align-items: center; justify-content: center; flex: none; }
  .step.off svg { opacity: .25; }
  main { flex: none; height: 671px; display: flex; }
  .toolbox { width: 51px; flex: none; padding: 5px 0 0 4px; box-sizing: border-box; display: flex; flex-direction: column; }
  .tool { width: 43px; height: 33px; margin-bottom: 1px; padding: 0 2px 2px 0; box-sizing: border-box; display: flex; align-items: center; justify-content: center; border-radius: 5px; border: 1px solid transparent; flex: none; }
  .on { background: #d6d1cd; border-color: #cdc7c2 !important; }
  .hsep { height: 1px; margin: 6px 0 7px; width: 43px; background: #dcdad7; flex: none; }
  .expand { margin: 39px 0 0 19px; }
  .editor { flex: none; width: 729px; display: grid; grid-template: 27px 617px 27px / 20px 691px 18px; }
  .corner { padding: 1px 0 0 2px; }
  .corner.right { padding-left: 1px; }
  .mini { display: flex; align-items: center; justify-content: center; box-sizing: border-box; width: 17px; height: 25px; border: 1px solid #d0cbc6; border-radius: 4px; background: #f6f5f4; }
  .ruler { background: #f6f5f4; }
  .ruler text { font: 9.5px "Noto Sans", sans-serif; fill: #555a5c; letter-spacing: 0; }
  .canvas { background: #fff; }
  .art { font: 46px "Liberation Sans", Arial, sans-serif; fill: #000; letter-spacing: 0; }
  .vscroll { background: #cdcdcd; padding: 114px 0 0 5px; }
  .vscroll i { display: block; width: 8px; height: 247px; border-radius: 4px; background: #7f8382; }
  .hscroll { background: #cdcdcd; padding: 9px 0 0 268px; }
  .hscroll i { display: block; width: 158px; height: 8px; border-radius: 4px; background: #7f8382; }
  .cms { padding: 1px 0 0 1px; }
  .wheel { width: 13px; height: 17px; clip-path: polygon(5% 0, 30% 5%, 100% 68%, 30% 100%, 15% 95%); background: conic-gradient(at 45% 60%, #9f0, #fd0 50deg, #f02 100deg, #f0f 135deg, #22f 180deg, #0cf 250deg, #0e4 310deg, #9f0); }
  .grip { width: 11px; margin-right: 1px; flex: none; display: flex; flex-direction: column; align-items: center; gap: 2px; padding-top: 329px; }
  .grip i { width: 3px; height: 3px; border-radius: 50%; background: #2e3436; }
  .dock { box-sizing: border-box; width: 408px; height: 637px; flex: none; margin-top: 17px; border: 1px solid #cdc7c2; background: #fff; }
  .tabs { display: flex; height: 36px; background: #e1dedb; border-bottom: 1px solid #cdc7c2; padding-left: 9px; }
  .tab { display: flex; align-items: center; flex: none; }
  .active { width: 188px; height: 37px; box-sizing: border-box; background: #ebe9e6; border-bottom: 4px solid #3584e4; padding: 2px 0 0 12px; letter-spacing: -0.4px; }
  .active span { margin: 0 6px 0 2px; white-space: nowrap; }
  .t1 { margin-left: 29px; }
  .t2, .t3 { margin-left: 48px; }
  h4 { margin: 1px 0 0 1px; font-size: 14px; line-height: 19px; height: 19px; letter-spacing: -0.25px; color: #2e3436; }
  .relative { display: flex; height: 34px; align-items: center; margin: 3px 0 6px; }
  .groupbtn { margin-left: 11px; width: 40px; height: 30px; box-sizing: border-box; border: 1px dashed #ccc; border-radius: 3px; display: flex; align-items: center; justify-content: center; }
  .rel { width: 76px; margin-left: 94px; white-space: nowrap; }
  .combo { width: 140px; height: 34px; box-sizing: border-box; border: 1px solid #cdc7c2; border-radius: 5px; background: linear-gradient(#f8f7f6, #edebe9); display: flex; align-items: center; justify-content: space-between; padding: 0 11px; white-space: nowrap; }
  .anchor { margin-left: 10px; }
  .irow { display: flex; justify-content: flex-end; gap: 20px; height: 24px; margin: 5px 11px 5px 0; padding-bottom: 5px; box-sizing: content-box; }
  .irow + .irow { margin-top: 0; }
  .h2, .h3, .h4 { margin-top: -1px; }
  .dist { margin-top: 9px; }
  .tall { height: 24px; margin-top: 9px; }
  .overlap { display: flex; align-items: center; height: 34px; margin-top: 3px; padding-left: 135px; }
  .overlap label { width: 18px; }
  .overlap .v { margin-left: 3px; width: 16px; }
  .overlap > svg { margin-left: 13px; }
  .snapbar { width: 40px; margin-left: 20px; padding-top: 4px; }
  .slot { display: flex; height: 35px; align-items: center; }
  .slot > span { width: 36px; height: 34px; box-sizing: border-box; border: 1px solid transparent; border-radius: 5px; display: flex; align-items: center; justify-content: center; }
  .snapbar .hsep { display: block; width: 36px; }
  .snapbar .expand { margin: 31px 0 0 15px; }
  .palette { flex: none; height: 34px; display: flex; padding-left: 1px; }
  .strip { width: 1222px; }
  .swatches { display: flex; height: 19px; overflow: hidden; }
  .swatches b { width: 19px; height: 19px; flex: none; }
  .pscroll { height: 15px; background: #cdcdcd; padding: 4px 0 0 3px; box-sizing: border-box; }
  .pscroll i { display: block; width: 175px; height: 8px; border-radius: 4px; background: #7f8382; }
  .back { margin: 11px 0 0 15px; }
  footer { flex: none; height: 39px; display: flex; align-items: center; box-sizing: border-box; }
  footer .spin { height: 38px; }
  .fs { display: flex; flex-direction: column; height: 38px; flex: none; }
  .lab { width: 47px; text-align: right; }
  .paint { width: 50px; margin-left: 17px; text-align: center; }
  .paint b { height: 19px; background: #000; border-radius: 3px; }
  .stroke-w { align-self: flex-end; margin: 0 0 1px 5px; width: 40px; letter-spacing: 0.4px; }
  .o { width: 17px; margin-left: 2px; }
  .fsep { width: 1px; height: 38px; background: #dcdad7; flex: none; margin-left: 4px; }
  .eye { margin-left: 11px; }
  .lk { margin-left: 20px; }
  .layer { box-sizing: border-box; margin-left: 10px; width: 87px; height: 38px; border: 1px solid #cdc7c2; border-radius: 5px; background: linear-gradient(#f8f7f6, #edebe9); display: flex; align-items: center; justify-content: center; gap: 4px; font-size: 12px; font-weight: 600; white-space: nowrap; flex: none; }
  p { margin: 0 0 0 13px; width: 449px; white-space: nowrap; flex: none; letter-spacing: -0.28px; }
  .coords { display: grid; grid-template-columns: 14px 61px; margin-left: 10px; flex: none; letter-spacing: 0.4px; }
  .coords span:nth-child(even) { text-align: right; }
  .z { width: 23px; margin-left: 10px; }
  .r { width: 23px; margin-left: 10px; }
  .z + .spin .step, .r + .spin .step { padding-right: 2px; }
</style>
